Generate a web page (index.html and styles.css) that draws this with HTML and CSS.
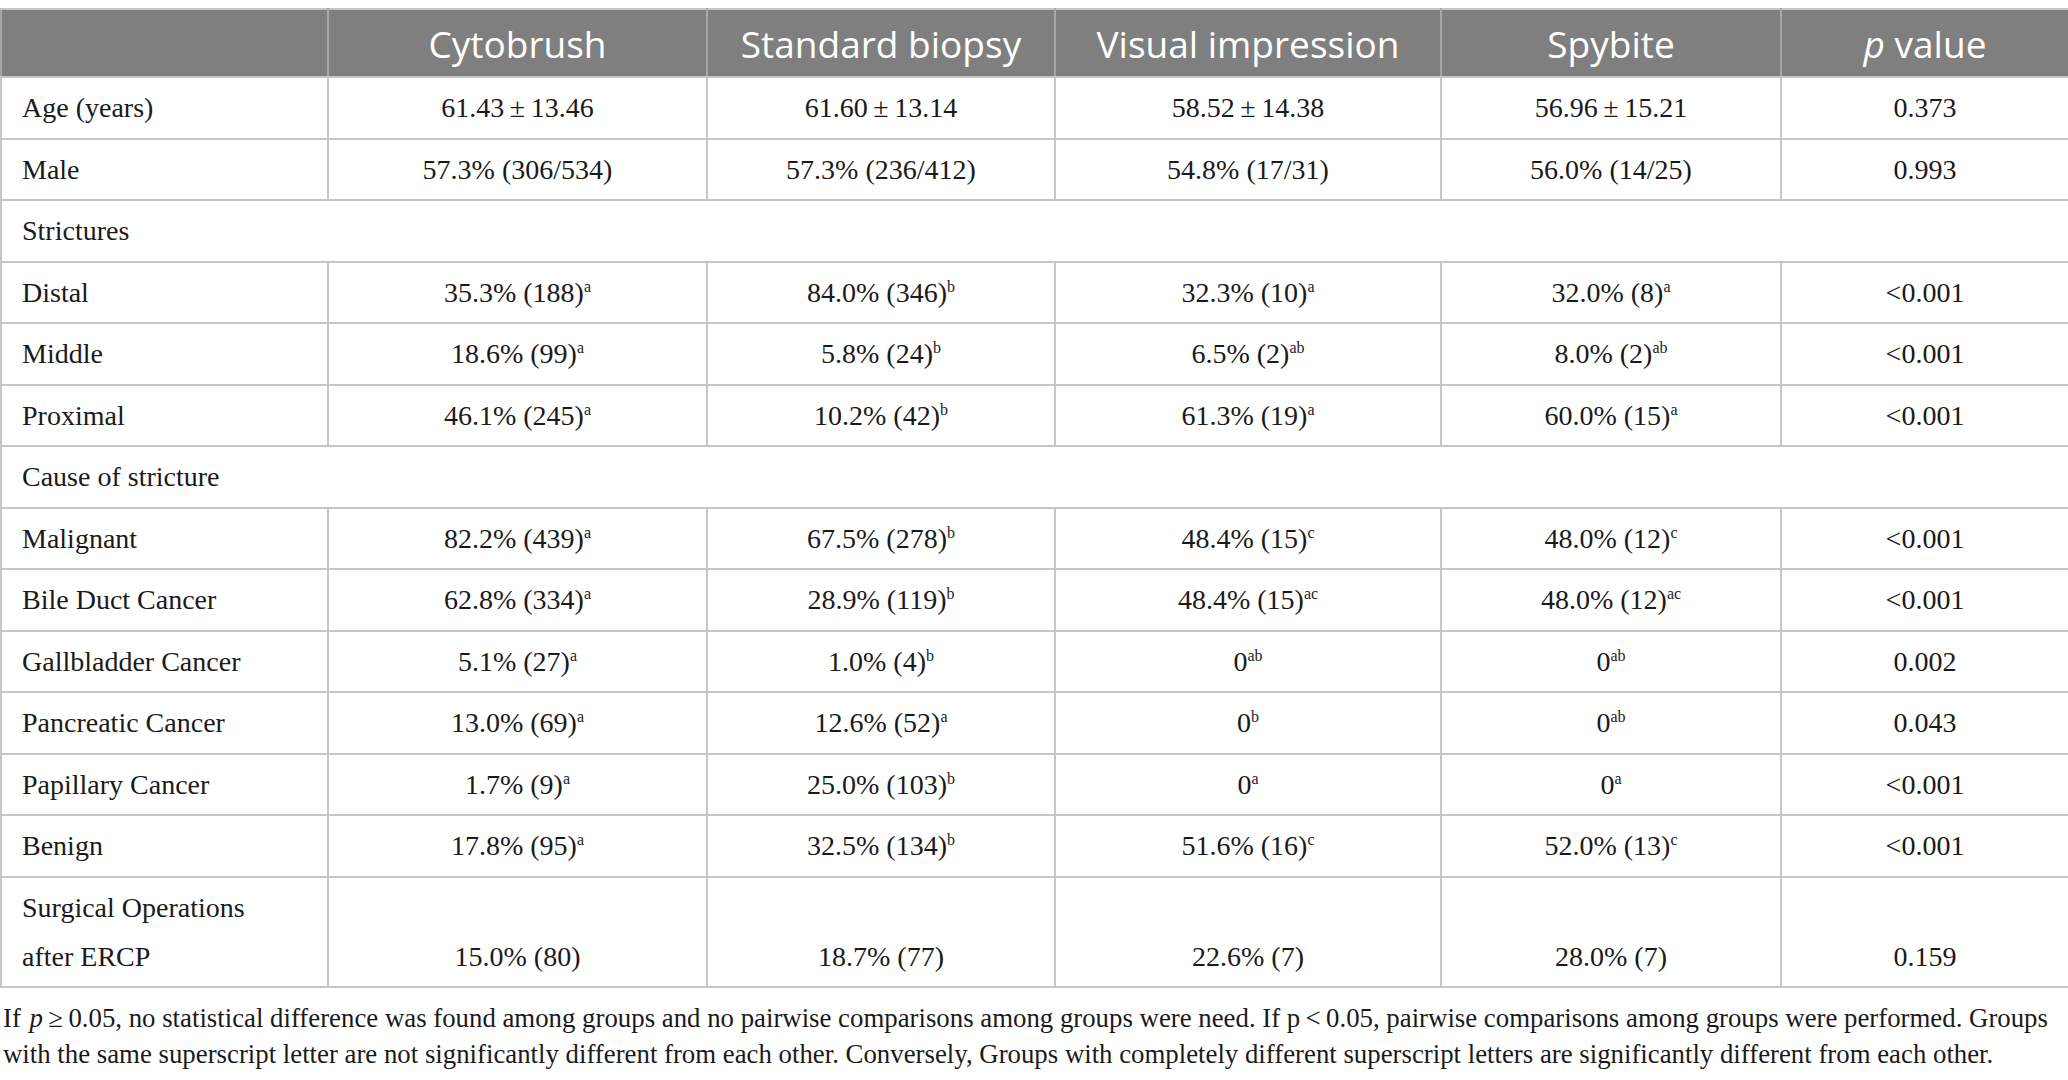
FILE: index.html
```html
<!DOCTYPE html>
<html lang="en">
<head>
    <meta charset="UTF-8">
    <meta name="viewport" content="width=device-width, initial-scale=1.0">
    <title>Stricture characteristics by sampling method</title>
    <link rel="stylesheet" href="styles.css">
</head>
<body>

    <!-- Results table -->
    <table class="results">
        <colgroup>
            <col class="col-label">
            <col class="col-cyto">
            <col class="col-std">
            <col class="col-visual">
            <col class="col-spy">
            <col class="col-p">
        </colgroup>
        <thead>
            <tr>
                <th></th>
                <th>Cytobrush</th>
                <th>Standard biopsy</th>
                <th>Visual impression</th>
                <th>Spybite</th>
                <th><i>p</i> value</th>
            </tr>
        </thead>
        <tbody>
            <tr>
                <td>Age (years)</td>
                <td>61.43&thinsp;±&thinsp;13.46</td>
                <td>61.60&thinsp;±&thinsp;13.14</td>
                <td>58.52&thinsp;±&thinsp;14.38</td>
                <td>56.96&thinsp;±&thinsp;15.21</td>
                <td>0.373</td>
            </tr>
            <tr>
                <td>Male</td>
                <td>57.3% (306/534)</td>
                <td>57.3% (236/412)</td>
                <td>54.8% (17/31)</td>
                <td>56.0% (14/25)</td>
                <td>0.993</td>
            </tr>
            <tr>
                <td colspan="6">Strictures</td>
            </tr>
            <tr>
                <td>Distal</td>
                <td>35.3% (188)<sup>a</sup></td>
                <td>84.0% (346)<sup>b</sup></td>
                <td>32.3% (10)<sup>a</sup></td>
                <td>32.0% (8)<sup>a</sup></td>
                <td>&lt;0.001</td>
            </tr>
            <tr>
                <td>Middle</td>
                <td>18.6% (99)<sup>a</sup></td>
                <td>5.8% (24)<sup>b</sup></td>
                <td>6.5% (2)<sup>ab</sup></td>
                <td>8.0% (2)<sup>ab</sup></td>
                <td>&lt;0.001</td>
            </tr>
            <tr>
                <td>Proximal</td>
                <td>46.1% (245)<sup>a</sup></td>
                <td>10.2% (42)<sup>b</sup></td>
                <td>61.3% (19)<sup>a</sup></td>
                <td>60.0% (15)<sup>a</sup></td>
                <td>&lt;0.001</td>
            </tr>
            <tr>
                <td colspan="6">Cause of stricture</td>
            </tr>
            <tr>
                <td>Malignant</td>
                <td>82.2% (439)<sup>a</sup></td>
                <td>67.5% (278)<sup>b</sup></td>
                <td>48.4% (15)<sup>c</sup></td>
                <td>48.0% (12)<sup>c</sup></td>
                <td>&lt;0.001</td>
            </tr>
            <tr>
                <td>Bile Duct Cancer</td>
                <td>62.8% (334)<sup>a</sup></td>
                <td>28.9% (119)<sup>b</sup></td>
                <td>48.4% (15)<sup>ac</sup></td>
                <td>48.0% (12)<sup>ac</sup></td>
                <td>&lt;0.001</td>
            </tr>
            <tr>
                <td>Gallbladder Cancer</td>
                <td>5.1% (27)<sup>a</sup></td>
                <td>1.0% (4)<sup>b</sup></td>
                <td>0<sup>ab</sup></td>
                <td>0<sup>ab</sup></td>
                <td>0.002</td>
            </tr>
            <tr>
                <td>Pancreatic Cancer</td>
                <td>13.0% (69)<sup>a</sup></td>
                <td>12.6% (52)<sup>a</sup></td>
                <td>0<sup>b</sup></td>
                <td>0<sup>ab</sup></td>
                <td>0.043</td>
            </tr>
            <tr>
                <td>Papillary Cancer</td>
                <td>1.7% (9)<sup>a</sup></td>
                <td>25.0% (103)<sup>b</sup></td>
                <td>0<sup>a</sup></td>
                <td>0<sup>a</sup></td>
                <td>&lt;0.001</td>
            </tr>
            <tr>
                <td>Benign</td>
                <td>17.8% (95)<sup>a</sup></td>
                <td>32.5% (134)<sup>b</sup></td>
                <td>51.6% (16)<sup>c</sup></td>
                <td>52.0% (13)<sup>c</sup></td>
                <td>&lt;0.001</td>
            </tr>
            <tr class="tall">
                <td>Surgical Operations<br>after ERCP</td>
                <td>15.0% (80)</td>
                <td>18.7% (77)</td>
                <td>22.6% (7)</td>
                <td>28.0% (7)</td>
                <td>0.159</td>
            </tr>
        </tbody>
    </table>

    <!-- Table footnote -->
    <p class="footnote">If <i class="pv">p</i>&thinsp;≥&thinsp;0.05, no statistical difference was found among groups and no pairwise comparisons among groups were need. If p&thinsp;&lt;&thinsp;0.05, pairwise comparisons among groups were performed. Groups with the same superscript letter are not significantly different from each other. Conversely, Groups with completely different superscript letters are significantly different from each other.</p>

</body>
</html>
```

FILE: styles.css
```css
body {
    margin: 0;
    padding-top: 8px;
    background-color: #fff;
    color: #1a1a1a;
    font-family: "Liberation Serif", "Times New Roman", serif;
}

.results {
    width: 2068px;
    table-layout: fixed;
    border-collapse: collapse;
    border: 2px solid #c6c6c6;
}

.col-label { width: 327px; }
.col-cyto { width: 379px; }
.col-std { width: 348px; }
.col-visual { width: 386px; }
.col-spy { width: 340px; }
.col-p { width: 288px; }

.results th {
    height: 66px;
    padding: 0 10px;
    background-color: #7f7f7f;
    color: #fff;
    font-family: "Open Sans", "Noto Sans", sans-serif;
    font-size: 37px;
    font-weight: normal;
    text-align: center;
    border: 2px solid #a6a6a6;
    border-top-color: #c6c6c6;
    border-bottom-color: #c6c6c6;
}

.results td {
    padding: 5px 20px 5.5px;
    font-size: 28px;
    line-height: 49px;
    text-align: center;
    white-space: nowrap;
    border: 2px solid #c6c6c6;
}

.results td:first-child {
    text-align: left;
}

.results .tall td {
    vertical-align: bottom;
}

.results sup {
    font-size: 16px;
    line-height: 0;
    vertical-align: 10px;
}

.footnote {
    margin: 12px 0 0;
    padding: 0 3px;
    font-size: 26.8px;
    line-height: 36px;
}

.footnote .pv {
    margin-left: 2px;
}
```
